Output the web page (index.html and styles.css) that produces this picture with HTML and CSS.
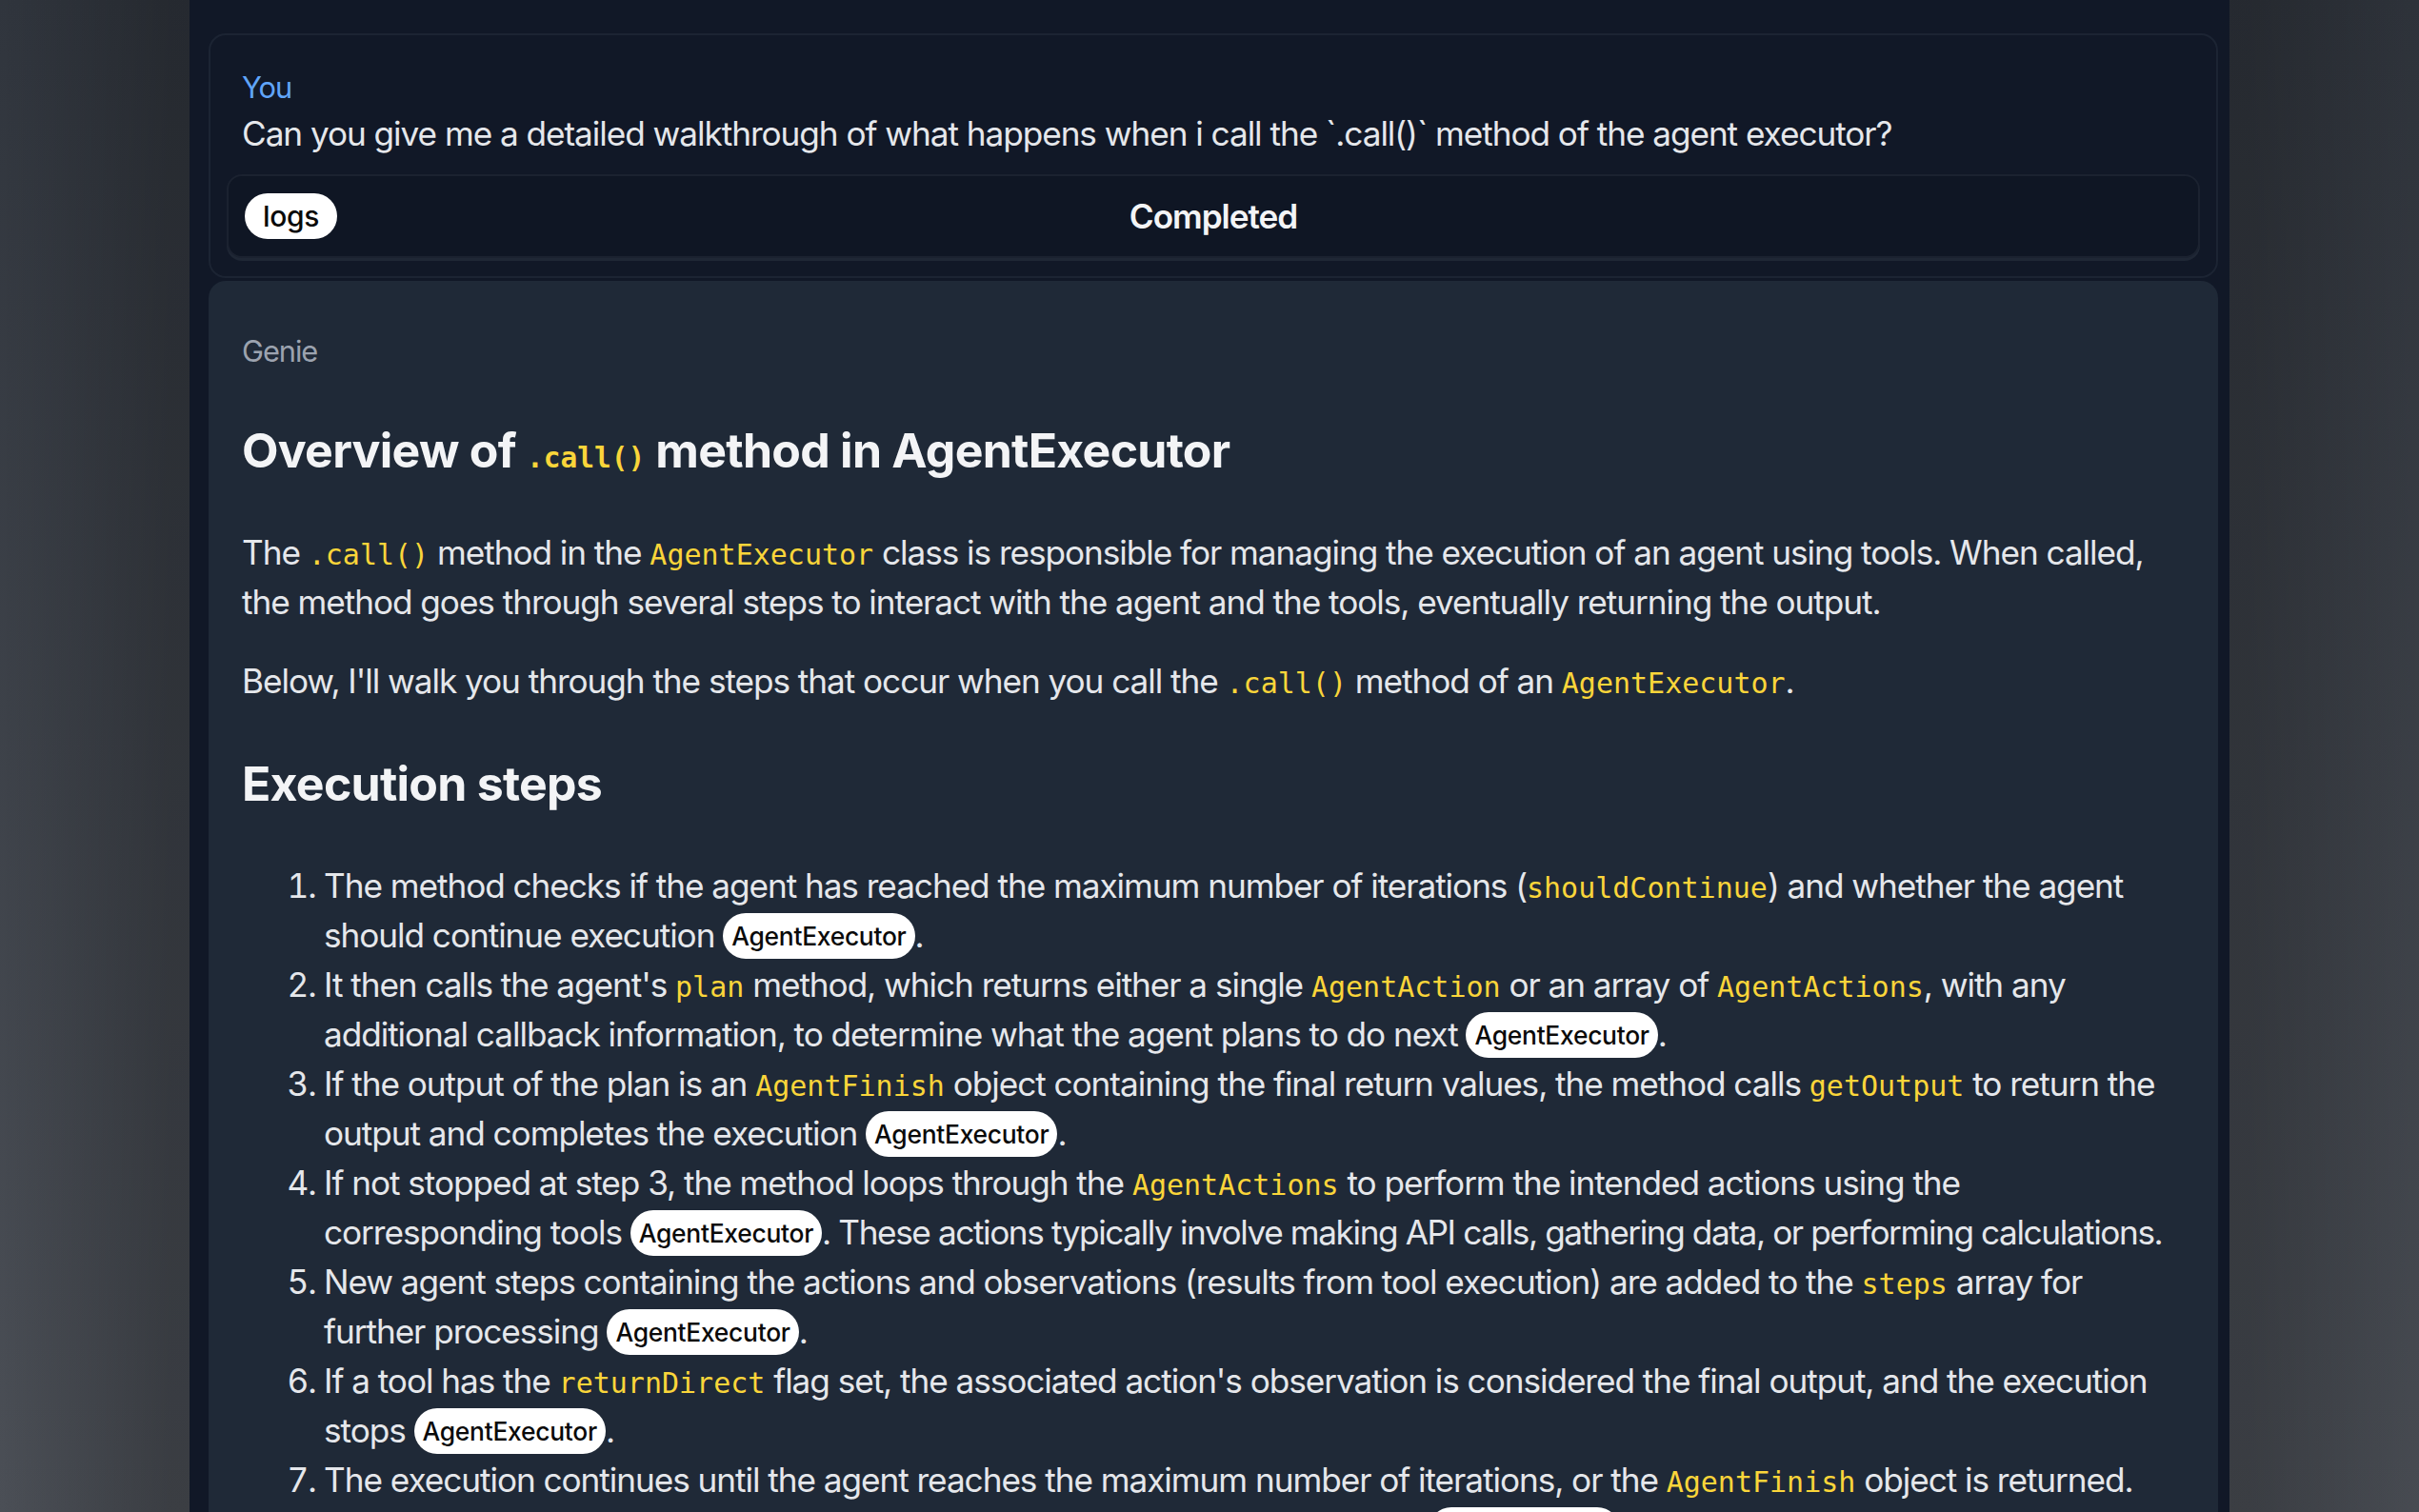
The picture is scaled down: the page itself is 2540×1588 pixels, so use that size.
FILE: index.html
```html
<!DOCTYPE html>
<html lang="en">

<head>
    <meta charset="UTF-8">
    <meta name="viewport" content="width=device-width, initial-scale=1.0">
    <title>Genie</title>
    <link rel="stylesheet" href="styles.css">
</head>

<body>
    <main class="thread">
        <!-- question -->
        <section class="msg msg-user">
            <div class="msg-head">
                <div class="role role-user">You</div>
                <div class="msg-text">Can you give me a detailed walkthrough of what happens when i call the `.call()` method of the agent executor?</div>
            </div>
            <div class="status-bar">
                <span class="pill pill-logs">logs</span>
                <span class="status">Completed</span>
                <span></span>
            </div>
        </section>

        <!-- answer -->
        <section class="msg msg-bot">
            <div class="role role-bot">Genie</div>
            <div class="prose">
                <h2>Overview of <code>.call()</code> method in AgentExecutor</h2>
                <p>The <code>.call()</code> method in the <code>AgentExecutor</code> class is responsible for managing the execution of an agent using tools. When called, the method goes through several steps to interact with the agent and the tools, eventually returning the output.</p>
                <p>Below, I'll walk you through the steps that occur when you call the <code>.call()</code> method of an <code>AgentExecutor</code>.</p>

                <h3>Execution steps</h3>
                <ol>
                    <li>The method checks if the agent has reached the maximum number of iterations (<code>shouldContinue</code>) and whether the agent should continue execution <span class="pill">AgentExecutor</span>.</li>
                    <li>It then calls the agent's <code>plan</code> method, which returns either a single <code>AgentAction</code> or an array of <code>AgentActions</code>, with any additional callback information, to determine what the agent plans to do next <span class="pill">AgentExecutor</span>.</li>
                    <li>If the output of the plan is an <code>AgentFinish</code> object containing the final return values, the method calls <code>getOutput</code> to return the output and completes the execution <span class="pill">AgentExecutor</span>.</li>
                    <li>If not stopped at step 3, the method loops through the <code>AgentActions</code> to perform the intended actions using the corresponding tools <span class="pill">AgentExecutor</span><span class="tight">. These actions typically involve making API calls, gathering data, or performing calculations.</span></li>
                    <li>New agent steps containing the actions and observations (results from tool execution) are added to the <code>steps</code> array for further processing <span class="pill">AgentExecutor</span>.</li>
                    <li>If a tool has the <code>returnDirect</code> flag set, the associated action's observation is considered the final output, and the execution stops <span class="pill">AgentExecutor</span>.</li>
                    <li>The execution continues until the agent reaches the maximum number of iterations, or the <code>AgentFinish</code> object is returned. Finally, the method returns the output along with all the intermediate steps <span class="pill">AgentExecutor</span>.</li>
                </ol>
            </div>
        </section>
    </main>
</body>

</html>
```

FILE: styles.css
```css
* {
    margin: 0;
    padding: 0;
    box-sizing: border-box;
}

html,
body {
    height: 100%;
}

body {
    font-family: 'Inter', 'Liberation Sans', sans-serif;
    font-size: 35.2px;
    letter-spacing: -0.03em;
    color: #e5e7eb;
    background:
        linear-gradient(to right, rgba(0, 0, 0, 0) 0%, rgba(0, 0, 0, 0.22) 7%, rgba(0, 0, 0, 0.22) 93%, rgba(0, 0, 0, 0.05) 100%),
        linear-gradient(to bottom, #30353d, #4b4f56);
    overflow: hidden;
}

.thread {
    width: 2142px;
    height: 100%;
    margin: 0 auto;
    padding: 35px 12px 0 20px;
    background: #111827;
    display: flex;
    flex-direction: column;
    gap: 3px;
}

.msg {
    border-radius: 18px;
}

.msg-user {
    border: 2px solid #1c2433;
    padding: 33px 17px 19px;
}

.msg-head {
    padding: 0 16px;
}

.role {
    font-size: 30.8px;
    line-height: 44px;
}

.role-user {
    color: #60a5fa;
}

.role-bot {
    color: #9ca3af;
}

.msg-text {
    font-size: 35.2px;
    line-height: 52.8px;
}

.status-bar {
    margin-top: 16px;
    border: 2px solid #1b2230;
    border-radius: 16px;
    background: #0f1624;
    box-shadow: 0 3px 0 #1f2735;
    padding: 18px 17px;
    display: grid;
    grid-template-columns: 1fr auto 1fr;
    align-items: center;
}

.status {
    font-size: 35.2px;
    font-weight: 600;
    color: #f3f4f6;
}

.pill {
    display: inline-block;
    background: #ffffff;
    color: #0a0a0a;
    border-radius: 999px;
    font-size: 26.4px;
    font-weight: 500;
    letter-spacing: -0.01em;
    line-height: 48px;
    height: 48px;
    padding: 0 9px;
    vertical-align: 2px;
}

.pill-logs {
    justify-self: start;
    font-size: 30px;
    padding: 0 19px;
    vertical-align: baseline;
}

.msg-bot {
    flex: 1;
    background: #1f2937;
    padding: 52px 35px 0;
}

.prose {
    font-size: 35.2px;
    line-height: 52px;
}

.prose h2,
.prose h3 {
    font-size: 50px;
    font-weight: 700;
    letter-spacing: -0.015em;
    color: #f3f4f6;
}

.prose h2 {
    line-height: 70px;
    margin-top: 47px;
}

.prose h3 {
    line-height: 60px;
    margin-top: 52px;
}

.prose p {
    margin-top: 31px;
}

.prose h2 + p {
    margin-top: 46px;
}

.prose code {
    font-family: 'DejaVu Sans Mono', 'Liberation Mono', monospace;
    font-size: 30px;
    line-height: 1;
    letter-spacing: 0;
    color: #fad53a;
}

.prose h2 code {
    font-size: 29.5px;
}

.prose ol {
    margin-top: 51px;
    padding-left: 86px;
}

/* Inter runs a little wider than the original UI font on this line */
.tight {
    letter-spacing: -0.04em;
}
```
